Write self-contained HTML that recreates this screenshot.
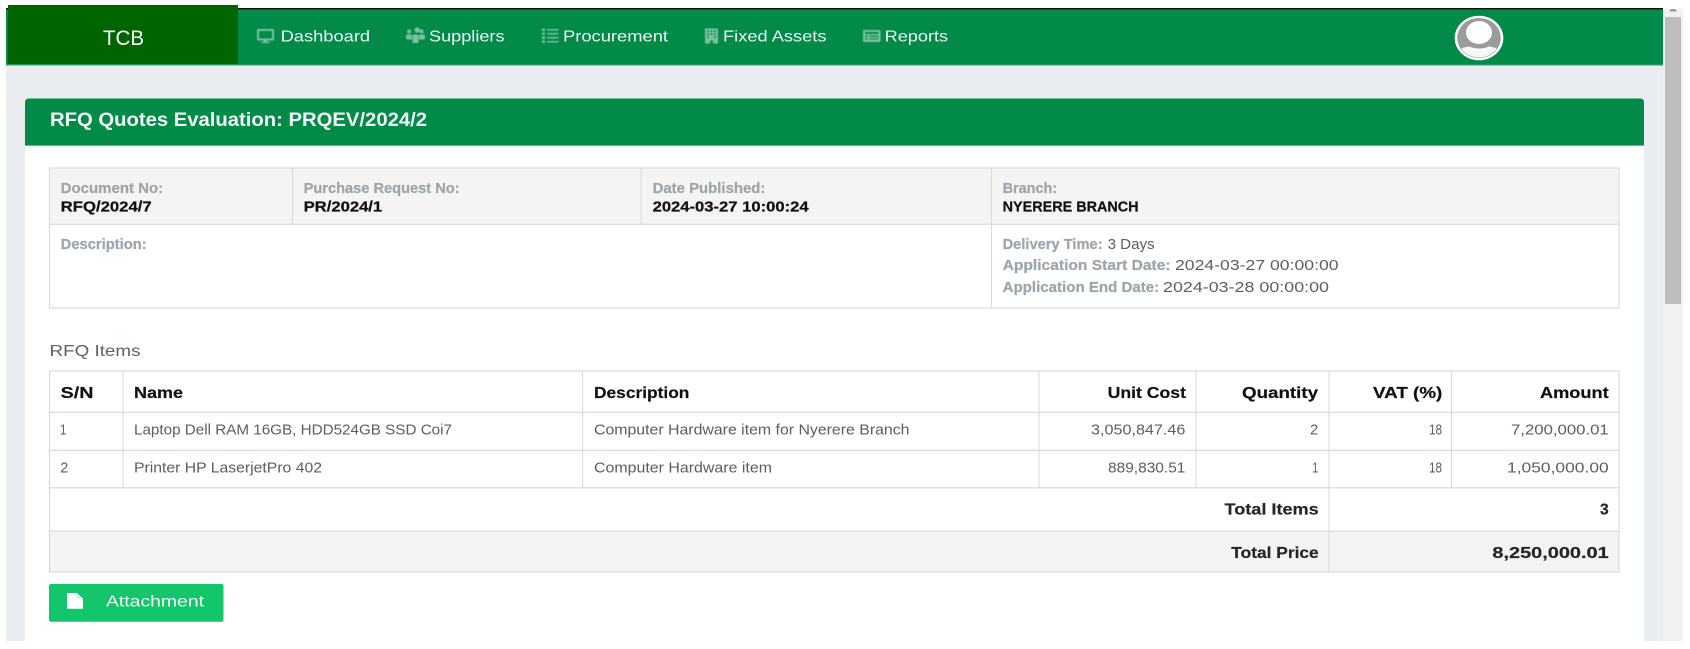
<!DOCTYPE html>
<html lang="en">
<head>
<meta charset="utf-8">
<title>RFQ Quotes Evaluation</title>
<style>
html,body{margin:0;padding:0;width:1690px;height:649px;overflow:hidden;background:#fff}
svg{display:block;position:absolute;left:0;top:0}
text{font-family:"Liberation Sans",Arial,sans-serif;font-size:14px;fill:#555;filter:blur(.3px)}
.nav{font-size:16px;fill:#eef8f2}
.lb{font-weight:bold;fill:#9ca6ac;stroke:#9ca6ac;stroke-width:.25px;font-size:14.500px}
.val{font-weight:bold;fill:#111;stroke:#111;stroke-width:.25px;font-size:14.500px}
.th{font-weight:bold;fill:#111;stroke:#111;stroke-width:.2px;font-size:16px}
.td{fill:#595f63;font-size:14.500px}
.tot{font-weight:bold;fill:#23272b;stroke:#23272b;stroke-width:.2px;font-size:16px}
.ic{filter:blur(.45px)}
</style>
</head>
<body>
<svg width="1690" height="649" viewBox="0 0 1690 649" xmlns="http://www.w3.org/2000/svg">
<!-- body -->
<rect x="6" y="9" width="1657" height="632" fill="#e9edf0"/>
<!-- scrollbar -->
<rect x="1663" y="9" width="20" height="632" fill="#f1f1f1"/>
<rect x="1665" y="17" width="16" height="287" fill="#bdbdbd"/>
<path d="M1669 11.500h8l-2-2.500h-4z" fill="#9a9a9a"/>
<!-- navbar -->
<rect x="6" y="9" width="1657" height="56" fill="#018a48"/>
<rect x="6" y="8" width="1657" height="1.400" fill="#111"/>
<rect x="6" y="64.600" width="1657" height="1" fill="#4fb083"/>
<rect x="8" y="5" width="230" height="59" fill="#006400"/>
<text x="103" y="45" textLength="41" lengthAdjust="spacingAndGlyphs" style="font-size:21px;fill:#fff">TCB</text>
<!-- nav icons -->
<g fill="#7cc2a0" class="ic">
<path d="M258 29h15q1 0 1 1v9.500q0 1-1 1h-5.500v1.500h2.500v1h-9v-1h2.500v-1.500h-5.500q-1 0-1-1v-9.500q0-1 1-1zm1 2v7.500h13v-7.500z" fill-rule="evenodd"/>
<path d="M414.500 30a2.700 2.700 0 1 1 0 .1zM407 31.500a2.100 2.100 0 1 1 4.200 0 2.100 2.100 0 1 1-4.200 0zm12.500 0a2.100 2.100 0 1 1 4.200 0 2.100 2.100 0 1 1-4.200 0zM406 35.500q0-1 1-1h4q1 .5 1 1.500v3.500h-5q-1 0-1-1zm19 0q0-1-1-1h-4q-1 .5-1 1.500v3.500h5q1 0 1-1zM412.500 36q0-1.500 1.500-1.500h3q1.500 0 1.500 1.500v6q0 1-1 1h-4q-1 0-1-1z"/>
<path d="M542 28.500h3v2.500h-3zM542 32.500h3v2.500h-3zM542 36.500h3v2.500h-3zM542 40.500h3v2.500h-3zM547 29h11.500v1.500h-11.500zM547 33h11.500v1.500h-11.500zM547 37h11.500v1.500h-11.500zM547 41h11.500v1.500h-11.500z"/>
<path d="M705 28.500h13v15h-5v-3h-3v3h-5zm2 2v1.500h2v-1.500zm3.500 0v1.500h2v-1.500zm3.500 0v1.500h2v-1.500zm-7 3v1.500h2v-1.500zm3.500 0v1.500h2v-1.500zm3.500 0v1.500h2v-1.500zm-7 3v1.500h2v-1.500zm7 0v1.500h2v-1.500z" fill-rule="evenodd"/>
<path d="M864 30h15.500q1 0 1 1v10q0 1-1 1h-15.500q-1 0-1-1v-10q0-1 1-1zm1 2v2h13.500v-2zm0 3.500v1.200h3v-1.200zm4.500 0v1.200h9v-1.200zm-4.500 2.700v1.200h3v-1.200zm4.500 0v1.200h9v-1.200z" fill-rule="evenodd"/>
</g>
<!-- nav text -->
<text class="nav" x="280.600" y="41.500" textLength="89.500" lengthAdjust="spacingAndGlyphs">Dashboard</text>
<text class="nav" x="429" y="41.500" textLength="75.500" lengthAdjust="spacingAndGlyphs">Suppliers</text>
<text class="nav" x="563" y="41.500" textLength="105" lengthAdjust="spacingAndGlyphs">Procurement</text>
<text class="nav" x="723" y="41.500" textLength="103.500" lengthAdjust="spacingAndGlyphs">Fixed Assets</text>
<text class="nav" x="884.600" y="41.500" textLength="63.500" lengthAdjust="spacingAndGlyphs">Reports</text>
<!-- avatar -->
<ellipse cx="1479" cy="38" rx="24.300" ry="22.300" fill="#fff"/>
<ellipse cx="1479" cy="38" rx="21.800" ry="20" fill="#9b9b9b"/>
<ellipse cx="1479" cy="32.500" rx="13" ry="11.500" fill="#fff"/>
<clipPath id="av"><ellipse cx="1479" cy="38" rx="21.300" ry="19.500"/></clipPath>
<path clip-path="url(#av)" d="M1455 60v-6q6-7 14-7.500 5 2 10 2t10-2q8 .5 14 7.500v6z" fill="#f6f8f7"/>
<!-- card -->
<rect x="25" y="105" width="1619" height="536" fill="#fff"/>
<path d="M25 145.500v-43q0-4 4-4h1611q4 0 4 4v43z" fill="#018a48"/>
<rect x="25" y="145" width="1619" height="1" fill="#5bb88c"/>
<text x="50" y="126" textLength="377" lengthAdjust="spacingAndGlyphs" style="font-size:19px;font-weight:bold;fill:#f3faf6">RFQ Quotes Evaluation: PRQEV/2024/2</text>
<!-- info table -->
<rect x="49.500" y="168" width="1569.500" height="56" fill="#f4f4f4"/>
<rect x="49.500" y="168" width="1569.500" height="140" fill="none" stroke="#d6dade" stroke-width="1.100"/>
<path d="M49.500 224.300H1619" stroke="#d6dade" stroke-width="1.100" fill="none"/>
<path d="M292.500 168v56M641 168v56M991.500 168v140" stroke="#d6dade" stroke-width="1" fill="none"/>
<text class="lb" x="60.700" y="192.800" textLength="102.500" lengthAdjust="spacingAndGlyphs">Document No:</text>
<text class="val" x="60.700" y="211.300" textLength="91" lengthAdjust="spacingAndGlyphs">RFQ/2024/7</text>
<text class="lb" x="303.600" y="192.800" textLength="156" lengthAdjust="spacingAndGlyphs">Purchase Request No:</text>
<text class="val" x="303.600" y="211.300" textLength="78.600" lengthAdjust="spacingAndGlyphs">PR/2024/1</text>
<text class="lb" x="652.600" y="192.800" textLength="112.800" lengthAdjust="spacingAndGlyphs">Date Published:</text>
<text class="val" x="652.600" y="211.300" textLength="156" lengthAdjust="spacingAndGlyphs">2024-03-27 10:00:24</text>
<text class="lb" x="1002.600" y="192.800" textLength="54.500" lengthAdjust="spacingAndGlyphs">Branch:</text>
<text class="val" x="1002.600" y="211.300" textLength="136" lengthAdjust="spacingAndGlyphs">NYERERE BRANCH</text>
<text class="lb" x="60.700" y="249.200" textLength="86" lengthAdjust="spacingAndGlyphs">Description:</text>
<text class="lb" x="1002.600" y="249.200" textLength="100" lengthAdjust="spacingAndGlyphs">Delivery Time:</text>
<text class="td" x="1107.600" y="249.200" textLength="47" lengthAdjust="spacingAndGlyphs">3 Days</text>
<text class="lb" x="1002.600" y="270" textLength="168" lengthAdjust="spacingAndGlyphs">Application Start Date:</text>
<text class="td" x="1175" y="270" textLength="163.600" lengthAdjust="spacingAndGlyphs">2024-03-27 00:00:00</text>
<text class="lb" x="1002.600" y="292" textLength="156.600" lengthAdjust="spacingAndGlyphs">Application End Date:</text>
<text class="td" x="1163" y="292" textLength="166" lengthAdjust="spacingAndGlyphs">2024-03-28 00:00:00</text>
<!-- RFQ Items -->
<text x="49.500" y="356" textLength="91" lengthAdjust="spacingAndGlyphs" style="font-size:16px;fill:#5a6268">RFQ Items</text>
<!-- items table -->
<rect x="49.500" y="531" width="1569.500" height="41" fill="#f4f4f4"/>
<rect x="49.500" y="371" width="1569.500" height="201" fill="none" stroke="#d4d8de" stroke-width="1.100"/>
<path d="M49.500 412.300H1619M49.500 450.300H1619M49.500 487.800H1619M49.500 531.200H1619" stroke="#d4d8de" stroke-width="1.100" fill="none"/>
<path d="M123 371v117M582.600 371v117M1039 371v117M1196 371v117M1451.500 371v117M1329 371v201" stroke="#d4d8de" stroke-width="1" fill="none"/>
<text class="th" x="60.700" y="398" textLength="32.700" lengthAdjust="spacingAndGlyphs">S/N</text>
<text class="th" x="134" y="398" textLength="49" lengthAdjust="spacingAndGlyphs">Name</text>
<text class="th" x="594" y="398" textLength="95.400" lengthAdjust="spacingAndGlyphs">Description</text>
<text class="th" x="1107.600" y="398" textLength="78.400" lengthAdjust="spacingAndGlyphs">Unit Cost</text>
<text class="th" x="1242" y="398" textLength="76" lengthAdjust="spacingAndGlyphs">Quantity</text>
<text class="th" x="1373" y="398" textLength="69.300" lengthAdjust="spacingAndGlyphs">VAT (%)</text>
<text class="th" x="1540" y="398" textLength="68.700" lengthAdjust="spacingAndGlyphs">Amount</text>
<text class="td" x="60" y="434.500" textLength="6.500" lengthAdjust="spacingAndGlyphs">1</text>
<text class="td" x="134" y="434.500" textLength="318" lengthAdjust="spacingAndGlyphs">Laptop Dell RAM 16GB, HDD524GB SSD Coi7</text>
<text class="td" x="594" y="434.500" textLength="315.500" lengthAdjust="spacingAndGlyphs">Computer Hardware item for Nyerere Branch</text>
<text class="td" x="1091" y="434.500" textLength="94.400" lengthAdjust="spacingAndGlyphs">3,050,847.46</text>
<text class="td" x="1310" y="434.500" textLength="8.200" lengthAdjust="spacingAndGlyphs">2</text>
<text class="td" x="1429" y="434.500" textLength="13" lengthAdjust="spacingAndGlyphs">18</text>
<text class="td" x="1511" y="434.500" textLength="97.700" lengthAdjust="spacingAndGlyphs">7,200,000.01</text>
<text class="td" x="60.300" y="472.500" textLength="8" lengthAdjust="spacingAndGlyphs">2</text>
<text class="td" x="134" y="472.500" textLength="188" lengthAdjust="spacingAndGlyphs">Printer HP LaserjetPro 402</text>
<text class="td" x="594" y="472.500" textLength="178" lengthAdjust="spacingAndGlyphs">Computer Hardware item</text>
<text class="td" x="1108" y="472.500" textLength="77.400" lengthAdjust="spacingAndGlyphs">889,830.51</text>
<text class="td" x="1312.200" y="472.500" textLength="6" lengthAdjust="spacingAndGlyphs">1</text>
<text class="td" x="1429" y="472.500" textLength="13" lengthAdjust="spacingAndGlyphs">18</text>
<text class="td" x="1507" y="472.500" textLength="101.700" lengthAdjust="spacingAndGlyphs">1,050,000.00</text>
<text class="tot" x="1224.500" y="514.500" textLength="94.200" lengthAdjust="spacingAndGlyphs">Total Items</text>
<text class="tot" x="1600" y="514.500" textLength="8.700" lengthAdjust="spacingAndGlyphs">3</text>
<text class="tot" x="1231.300" y="558" textLength="87.400" lengthAdjust="spacingAndGlyphs">Total Price</text>
<text class="tot" x="1492.400" y="558" textLength="116.300" lengthAdjust="spacingAndGlyphs">8,250,000.01</text>
<!-- button -->
<rect x="49" y="584" width="174.500" height="37.700" rx="2" fill="#13c66c"/>
<path d="M67 593h10l6 5.500v10.200h-16z" fill="#fff"/>
<path d="M77 593v5.500h6" fill="#cdeedd"/>
<text x="106" y="606.700" textLength="98" lengthAdjust="spacingAndGlyphs" style="font-size:16px;fill:#f1fbf6">Attachment</text>
</svg>
</body>
</html>
